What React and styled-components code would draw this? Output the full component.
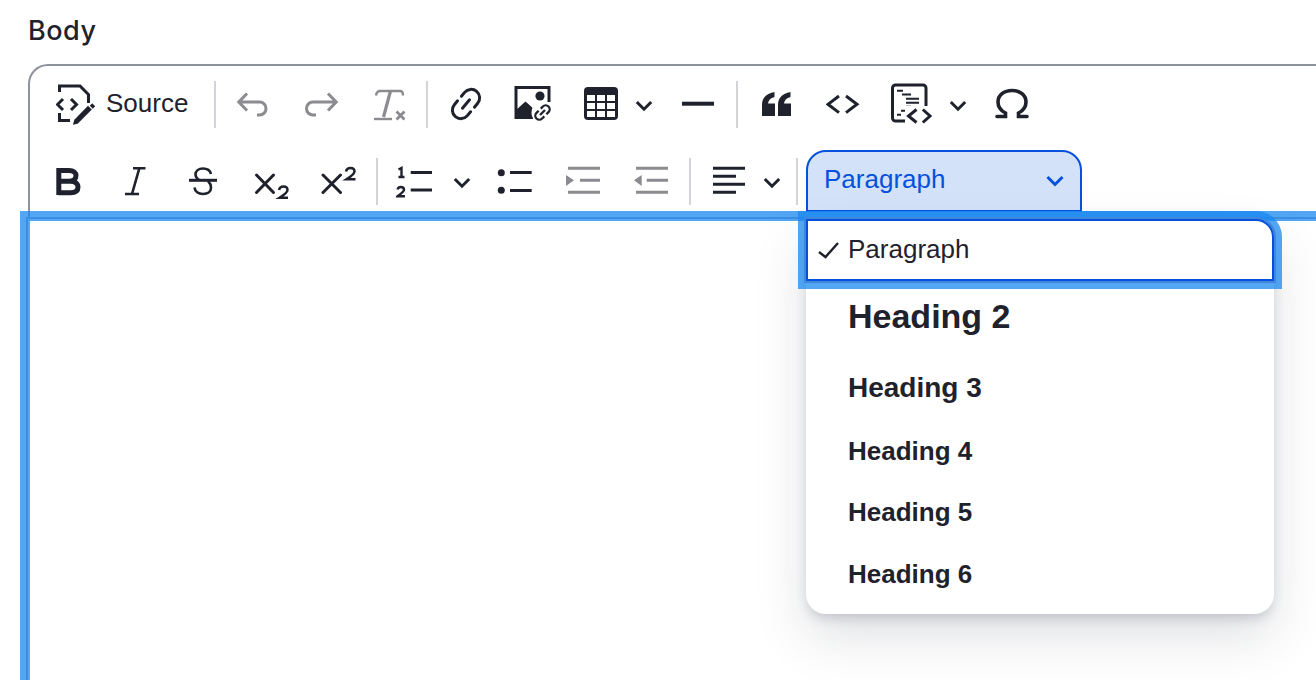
import React from 'react';
import styled, { createGlobalStyle } from 'styled-components';

const INK = '#1f222c';
const MUTED = '#8b8b90';
const BLUE = '#0550dc';
const RING = 'rgba(24, 136, 240, 0.75)';

const GlobalStyle = createGlobalStyle`
  html, body {
    margin: 0;
    background: #fff;
  }
  body {
    font-family: "Liberation Sans", Arial, sans-serif;
    color: ${INK};
  }
`;

const Page = styled.div`
  height: 680px;
  overflow: hidden;
  box-sizing: border-box;
  padding: 12px 0 0 28px;
`;

const FieldLabel = styled.div`
  height: 36px;
  margin-bottom: 16px;
  font-family: Inter, sans-serif;
  font-size: 27px;
  font-weight: 500;
  letter-spacing: 0.5px;
  line-height: 37px;
  color: ${INK};
`;

const Frame = styled.div`
  width: 1400px;
  border-top: 2px solid #8e929c;
  border-left: 2px solid #8e929c;
  border-top-left-radius: 20px;
`;

const Toolbar = styled.div`
  padding: 14px 0 5px;
`;

const ToolRow = styled.div`
  display: flex;
  align-items: center;
  height: ${(p) => p.$height}px;
  margin-top: ${(p) => p.$top || 0}px;
`;

const Glyph = styled.svg`
  flex: none;
  margin-left: ${(p) => p.$gap}px;
  fill: none;
  stroke: ${(p) => (p.$muted ? MUTED : INK)};
  stroke-width: 3;
`;

const Divider = styled.div`
  flex: none;
  width: 2px;
  height: 47px;
  margin-left: ${(p) => p.$gap}px;
  background: #d4d4d8;
`;

const SourceLabel = styled.span`
  flex: none;
  width: 82px;
  margin-left: 10px;
  padding-bottom: 2px;
  font-size: 26px;
  color: ${INK};
`;

const HeadingPicker = styled.div`
  position: relative;
  flex: none;
  align-self: stretch;
  width: 276px;
  margin-left: 8px;
`;

const PickerButton = styled.div`
  display: flex;
  align-items: center;
  justify-content: space-between;
  height: 100%;
  box-sizing: border-box;
  padding: 0 16px 4px;
  border: 2px solid ${BLUE};
  border-radius: 20px 20px 0 0;
  background: #d3e2f8;
  color: ${BLUE};
  font-size: 26px;
`;

const PickerChevron = styled.svg`
  margin-top: 4px;
  fill: none;
  stroke: ${BLUE};
  stroke-width: 3;
`;

const Panel = styled.div`
  position: absolute;
  z-index: 2;
  top: calc(100% + 8px);
  left: 0;
  width: 468px;
  height: 394px;
  border-radius: 0 18px 20px 20px;
  background: #fff;
  box-shadow: 0 6px 12px -2px rgba(40, 50, 70, 0.2), 0 22px 52px rgba(40, 50, 70, 0.15);
`;

const Option = styled.div`
  display: flex;
  align-items: center;
  box-sizing: border-box;
  height: ${(p) => p.$height}px;
  padding-left: 8px;
  font-size: ${(p) => p.$size}px;
  font-weight: 700;
  color: ${INK};
`;

const ActiveOption = styled(Option)`
  position: relative;
  margin-top: -1px;
  padding-left: 6px;
  padding-bottom: 1px;
  border: 2px solid ${BLUE};
  border-radius: 0 18px 0 0;
  font-weight: 400;
  box-shadow: 0 0 0 2px #3f86dc, 0 0 0 8px ${RING};
`;

const CheckSlot = styled.span`
  display: flex;
  flex: none;
  width: 34px;
`;

const CheckMark = styled.svg`
  margin-left: 3px;
  fill: none;
  stroke: ${INK};
  stroke-width: 2.4;
`;

const Editable = styled.div`
  position: relative;
  z-index: 1;
  height: 600px;
  margin-left: -4px;
  border: 2px solid #3b8fe2;
  box-shadow: 0 0 0 6px ${RING}, inset 0 0 0 2px ${RING};
  background: #fff;
`;

function Icon({ box, gap, muted, children }) {
  const [x, y, w, h] = box;
  return (
    <Glyph
      $gap={gap}
      $muted={muted}
      width={w}
      height={h}
      viewBox={`${x} ${y} ${w} ${h}`}
    >
      {children}
    </Glyph>
  );
}

function Chevron({ gap }) {
  return (
    <Icon box={[0, 0, 18, 44]} gap={gap}>
      <path d="M1.8 20L9 27.2L16.2 20" />
    </Icon>
  );
}

const HEADINGS = [
  { label: 'Heading 2', size: 34, height: 71 },
  { label: 'Heading 3', size: 28, height: 72 },
  { label: 'Heading 4', size: 26, height: 54 },
  { label: 'Heading 5', size: 26, height: 68 },
  { label: 'Heading 6', size: 26, height: 56 },
];

export default function App() {
  return (
    <Page>
      <GlobalStyle />
      <FieldLabel>Body</FieldLabel>
      <Frame>
        <Toolbar>
          <ToolRow $height={48}>
            <Icon box={[56, 82, 40, 44]} gap={26}>
              <path d="M59.5 92V86H80L88.5 94.5V103" />
              <path d="M59.5 113V120.5H70" />
              <path d="M63 99L57.5 104.5L63 110" />
              <path d="M71 99L76.5 104.5L71 110" />
              <path d="M77 122.5L74.8 123L75.5 120.5L88 107.5L90 109.5Z" fill={INK} strokeWidth="2.6" />
              <path d="M91 104.5L94 107.5" strokeWidth="3.4" />
            </Icon>
            <SourceLabel>Source</SourceLabel>
            <Divider $gap={26} />
            <Icon box={[236, 82, 36, 44]} gap={20} muted>
              <path d="M247 93.5L238.8 102L247 110.5M239 102H259.5A6.5 6.5 0 0 1 259.5 115H257" />
            </Icon>
            <Icon box={[303, 82, 36, 44]} gap={31} muted>
              <path d="M328 93.5L336.2 102L328 110.5M336 102H313A6.5 6.5 0 0 0 313 115H316" />
            </Icon>
            <Icon box={[373, 82, 36, 44]} gap={34} muted>
              <path d="M376 95.5C376.5 92.5 377.5 91 380 91H400C402 91 403 92.5 403 95.5" strokeWidth="2.4" />
              <path d="M390.5 91L383.5 117" strokeWidth="3.2" />
              <path d="M374 119H392" strokeWidth="2.4" />
              <path d="M396.5 111.5L404.5 119.5M404.5 111.5L396.5 119.5" strokeWidth="2.8" />
            </Icon>
            <Divider $gap={17} />
            <Icon box={[450, 82, 32, 44]} gap={22}>
              <g transform="rotate(-50 466 104)" strokeLinecap="round">
                <path d="M463 95.5H458A8.5 8.5 0 0 0 458 112.5H463" />
                <path d="M469 95.5H474A8.5 8.5 0 0 1 474 112.5H469" />
                <path d="M460.5 104H471.5" />
              </g>
            </Icon>
            <Icon box={[513, 82, 40, 44]} gap={31}>
              <path d="M533 117.5H516V87.5H549V102" />
              <path d="M516 117V110L525.5 101.5L535 110L532 118H516Z" fill={INK} stroke="none" />
              <circle cx="540" cy="96" r="4.6" fill={INK} stroke="none" />
              <circle cx="542.5" cy="112.5" r="11" fill="#fff" stroke="none" />
              <g transform="rotate(-45 542.5 112.5)" strokeWidth="2.3">
                <path d="M541 108.5H538A4 4 0 0 0 538 116.5H541" />
                <path d="M544 108.5H547A4 4 0 0 1 547 116.5H544" />
                <path d="M539 112.5H546" />
              </g>
            </Icon>
            <Icon box={[583, 82, 36, 44]} gap={30}>
              <rect x="584" y="87" width="34" height="33" rx="4" fill={INK} stroke="none" />
              <path
                d="M587 95h8v6h-8zM597 95h8v6h-8zM607 95h8v6h-8zM587 103h8v6h-8zM597 103h8v6h-8zM607 103h8v6h-8zM587 111h8v6h-8zM597 111h8v6h-8zM607 111h8v6h-8z"
                fill="#fff"
                stroke="none"
              />
            </Icon>
            <Chevron gap={16} />
            <Icon box={[681, 82, 34, 44]} gap={28}>
              <path d="M682 103.7H714" strokeWidth="4" />
            </Icon>
            <Divider $gap={21} />
            <Icon box={[760, 82, 32, 44]} gap={22}>
              <path
                d="M762 116V105C762 98 766 93.5 774.5 92V97C770.5 98 768.5 100 768 103.5H775V116ZM778 116V105C778 98 782 93.5 790.5 92V97C786.5 98 784.5 100 784 103.5H791V116Z"
                fill={INK}
                stroke="none"
              />
            </Icon>
            <Icon box={[826, 82, 34, 44]} gap={34}>
              <path d="M839 96L828 104.3L839 112.6M846 96L857 104.3L846 112.6" />
            </Icon>
            <Icon box={[890, 82, 42, 44]} gap={30}>
              <rect x="892.5" y="85" width="33.5" height="36" rx="3" />
              <path
                d="M897 90.7H903M902 94.4H911M906 98.7H919M906 102.7H919M906 106.7H911M901 110.7H905M897 114.7H901"
                strokeWidth="2"
              />
              <rect x="905" y="106" width="27" height="19" fill="#fff" stroke="none" />
              <path d="M916.5 109.5L908.5 116L916.5 122.5M922.8 109.5L930 116L922.8 122.5" />
            </Icon>
            <Chevron gap={17} />
            <Icon box={[995, 82, 36, 44]} gap={28}>
              <path
                d="M997 116.5H1005.5V113C1000.5 110.5 998 106 998 102C998 95 1004 90.5 1012 90.5C1020 90.5 1026 95 1026 102C1026 106 1023.5 110.5 1018.5 113V116.5H1027"
                strokeWidth="3.6"
                strokeLinecap="round"
              />
            </Icon>
          </ToolRow>
          <ToolRow $height={62} $top={22}>
            <Icon box={[56, 159, 26, 44]} gap={26}>
              <path
                d="M58.5 170.5H69C73.5 170.5 76 172.5 76 175.8C76 179.2 73.5 181.3 69 181.3M58.5 181.3H70.5C75.5 181.3 78 183.8 78 187.3C78 190.6 75.5 192.7 70.5 192.7H58.5M58.8 168V195"
                strokeWidth="5"
              />
            </Icon>
            <Icon box={[123, 159, 24, 44]} gap={41}>
              <path d="M133 168.3H145.5M125 194H139M139.3 168.3L132 194" strokeWidth="2.6" />
            </Icon>
            <Icon box={[188, 159, 30, 44]} gap={41}>
              <path d="M189 180.3H217" />
              <path
                d="M211 174C210 170 207 168.5 203 168.5C198.5 168.5 195.5 171 195.5 174.5C195.5 176.5 197 178.5 199 180M208 181C210 183 211 185 211 187.5C211 191.5 208 194 203 194C198.5 194 195 191.5 194.5 187.5"
                strokeWidth="2.6"
              />
            </Icon>
            <Icon box={[254, 159, 36, 44]} gap={36}>
              <path d="M256.5 175L273.5 192.5M273.5 175L256.5 192.5" strokeLinecap="round" />
              <path
                d="M279 190C279.5 187.5 281.5 186.5 283.5 186.5C286 186.5 287.5 188 287.5 190C287.5 192 285.5 194 279.5 197.8H288"
                strokeWidth="2.5"
              />
            </Icon>
            <Icon box={[321, 159, 36, 44]} gap={31}>
              <path d="M323 175L340.5 192.5M340.5 175L323 192.5" strokeLinecap="round" />
              <path
                d="M346 171.5C346.5 169 348.5 168 350.5 168C353 168 354.5 169.5 354.5 171.5C354.5 173.5 352.5 175.5 346.5 179.3H355.5"
                strokeWidth="2.5"
              />
            </Icon>
            <Divider $gap={19} />
            <Icon box={[396, 159, 37, 44]} gap={18}>
              <path d="M398.5 169.5L401.5 168V177M398.5 177H404.5" strokeWidth="2.4" />
              <path
                d="M397.5 189.5C398 187.8 399.3 187 400.8 187C402.8 187 404 188 404 189.8C404 191.8 401.5 193.5 397.5 196.3H405"
                strokeWidth="2.4"
              />
              <path d="M410.7 172.4H432M410.7 190H432" />
            </Icon>
            <Chevron gap={20} />
            <Icon box={[497, 159, 36, 44]} gap={26}>
              <circle cx="501.3" cy="172.7" r="3.5" fill={INK} stroke="none" />
              <circle cx="501.3" cy="190.3" r="3.5" fill={INK} stroke="none" />
              <path d="M510 172.5H531.7M510 190.5H531.7" />
            </Icon>
            <Icon box={[565, 159, 36, 44]} gap={32} muted>
              <path d="M568 168.3H600M580 180.3H600M568 192.3H600" />
              <path d="M566 175L574 180.3L566 186Z" fill={MUTED} stroke="none" />
            </Icon>
            <Icon box={[633, 159, 36, 44]} gap={32} muted>
              <path d="M636 168.3H668M646.7 180.3H668M636 192.3H668" />
              <path d="M641.7 175L634 180.3L641.7 186Z" fill={MUTED} stroke="none" />
            </Icon>
            <Divider $gap={20} />
            <Icon box={[712, 159, 34, 44]} gap={21}>
              <path d="M713 168.3H745M713 176.3H736M713 184.3H745M713 192.3H736" />
            </Icon>
            <Chevron gap={17} />
            <Divider $gap={15} />
            <HeadingPicker>
              <PickerButton>
                Paragraph
                <PickerChevron width="18" height="12" viewBox="0 0 18 12">
                  <path d="M1.5 2L9 9.5L16.5 2" />
                </PickerChevron>
              </PickerButton>
              <Panel>
                <ActiveOption $height={62} $size={26}>
                  <CheckSlot>
                    <CheckMark width="24" height="18" viewBox="0 0 24 18">
                      <path d="M2 11L8.5 16L21 2" />
                    </CheckMark>
                  </CheckSlot>
                  Paragraph
                </ActiveOption>
                {HEADINGS.map((h) => (
                  <Option key={h.label} $height={h.height} $size={h.size}>
                    <CheckSlot />
                    {h.label}
                  </Option>
                ))}
              </Panel>
            </HeadingPicker>
          </ToolRow>
        </Toolbar>
        <Editable />
      </Frame>
    </Page>
  );
}
